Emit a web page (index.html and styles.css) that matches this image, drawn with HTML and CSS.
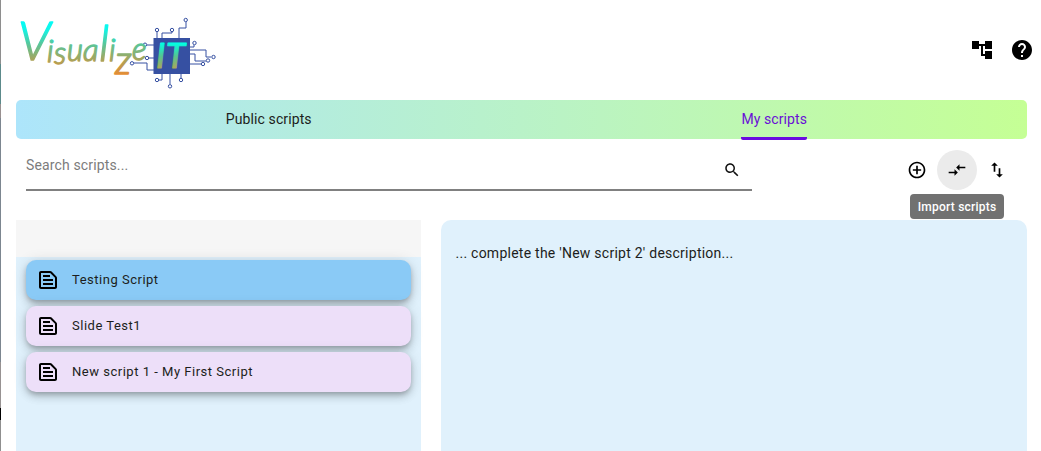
FILE: index.html
```html
<!DOCTYPE html>
<html lang="en">
<head>
<meta charset="utf-8">
<title>VisualizeIT</title>
<link rel="stylesheet" href="styles.css">
</head>
<body>
<div class="edge"></div>
<div class="page">
  <header class="header">
    <svg class="logo" viewBox="20 14 200 78" role="img" aria-label="VisualizeIT">
      <defs>
        <linearGradient id="ink" gradientUnits="userSpaceOnUse" x1="0" y1="18" x2="0" y2="80">
          <stop offset="0" stop-color="#00ffff"/>
          <stop offset=".18" stop-color="#0ff5e8"/>
          <stop offset=".42" stop-color="#58c69a"/>
          <stop offset=".7" stop-color="#b0a155"/>
          <stop offset="1" stop-color="#fb8427"/>
        </linearGradient>
        <linearGradient id="chipInk" gradientUnits="userSpaceOnUse" x1="0" y1="43" x2="0" y2="70">
          <stop offset="0" stop-color="#00ffe5"/>
          <stop offset=".5" stop-color="#58c48f"/>
          <stop offset="1" stop-color="#b7a352"/>
        </linearGradient>
      </defs>
      <g class="wires">
        <path d="M157 38v-6M162 38v-5h10v-1M179 38v-10h7v-6M190 47h4v-2M190 50h16v7h5M190 54h5v7h11M190 64h11M154 45h-7M154 58h-5M154 70h-7v-7h-13M162 74v6h-3M170 74v10M181 74v4"/>
        <circle cx="157" cy="30" r="1.7"/><circle cx="172" cy="30" r="1.7"/><circle cx="185.700" cy="20" r="1.700"/>
        <circle cx="194.500" cy="43" r="1.700"/><circle cx="213.500" cy="57" r="1.700"/><circle cx="208" cy="60.500" r="1.700"/>
        <circle cx="203" cy="64" r="1.700"/><circle cx="145" cy="44.700" r="1.700"/><circle cx="147" cy="58" r="1.700"/>
        <circle cx="132" cy="63.300" r="1.700"/><circle cx="157" cy="80" r="1.700"/><circle cx="170" cy="86.300" r="1.700"/>
        <circle cx="181" cy="80" r="1.700"/>
      </g>
      <rect x="153.500" y="38" width="36.500" height="36" fill="#3650a2"/>
      <text class="word" fill="url(#ink)" stroke="url(#ink)"><tspan class="cap" x="18" y="60">V</tspan><tspan x="47" y="62">i</tspan><tspan x="54" y="64">s</tspan><tspan x="67" y="61">u</tspan><tspan x="83" y="61">a</tspan><tspan class="tall" x="99" y="61">l</tspan><tspan x="109" y="61">i</tspan><tspan class="low" x="115" y="74">z</tspan><tspan x="132" y="60">e</tspan></text>
      <text class="chip" fill="url(#chipInk)" stroke="url(#chipInk)"><tspan x="156" y="68">I</tspan><tspan x="166" y="68">T</tspan></text>
    </svg>
    <nav class="actions">
      <svg class="icon24" viewBox="0 0 24 24"><path d="M22 11V3h-7v3H9V3H2v8h7V8h2v10h4v3h7v-8h-7v3h-2V8h2v3z"/></svg>
      <svg class="icon24" viewBox="0 0 24 24"><path d="M12 2C6.480 2 2 6.480 2 12s4.480 10 10 10 10-4.480 10-10S17.520 2 12 2zm1 17h-2v-2h2v2zm2.070-7.750l-.9.920C13.450 12.900 13 13.500 13 15h-2v-.5c0-1.100.45-2.100 1.170-2.830l1.240-1.260c.37-.36.59-.86.59-1.410 0-1.100-.9-2-2-2s-2 .9-2 2H8c0-2.210 1.790-4 4-4s4 1.790 4 4c0 .88-.36 1.680-.93 2.250z"/></svg>
    </nav>
  </header>

  <div class="tabs">
    <div class="tab"><span class="tab-label">Public scripts</span></div>
    <div class="tab"><span class="tab-label active">My scripts</span></div>
  </div>

  <div class="toolbar">
    <div class="search">
      <span class="placeholder">Search scripts...</span>
      <svg class="icon18" viewBox="0 0 24 24"><path d="M15.500 14h-.79l-.28-.27C15.410 12.590 16 11.110 16 9.500 16 5.910 13.090 3 9.500 3S3 5.910 3 9.500 5.910 16 9.500 16c1.610 0 3.090-.59 4.230-1.570l.27.28v.79l5 4.990L20.490 19l-4.990-5zm-6 0C7.010 14 5 11.990 5 9.500S7.010 5 9.500 5 14 7.010 14 9.500 11.990 14 9.500 14z"/></svg>
    </div>
    <div class="tools">
      <div class="tool"><svg class="icon20" viewBox="0 0 24 24"><path d="M13 7h-2v4H7v2h4v4h2v-4h4v-2h-4V7zm-1-5C6.480 2 2 6.480 2 12s4.480 10 10 10 10-4.480 10-10S17.520 2 12 2zm0 18c-4.410 0-8-3.590-8-8s3.590-8 8-8 8 3.590 8 8-3.590 8-8 8z"/></svg></div>
      <div class="tool hovered"><svg class="icon20" viewBox="0 0 24 24"><path d="M9.010 14H2v2h7.010v3L13 15l-3.990-4v3zm5.980-1v-3H22V8h-7.010V5L11 9l3.990 4z"/></svg><span class="tooltip">Import scripts</span></div>
      <div class="tool"><svg class="icon20" viewBox="0 0 24 24"><path d="M9 3L5 6.990h3V14h2V6.990h3L9 3zm7 14.010V10h-2v7.010h-3L15 21l4-3.990h-3z"/></svg></div>
    </div>
  </div>

  <main class="content">
    <section class="list">
      <div class="list-head"></div>
      <div class="items">
        <div class="item selected"><svg class="icon24" viewBox="0 0 24 24"><path d="M14.170 5L19 9.830V19H5V5h9.170m0-2H5c-1.100 0-2 .9-2 2v14c0 1.100.9 2 2 2h14c1.100 0 2-.9 2-2V9.830c0-.53-.21-1.040-.59-1.410l-4.830-4.830c-.37-.38-.88-.59-1.410-.59zM7 15h10v2H7v-2zm0-4h10v2H7v-2zm0-4h7v2H7V7z"/></svg><span>Testing Script</span></div>
        <div class="item"><svg class="icon24" viewBox="0 0 24 24"><path d="M14.170 5L19 9.830V19H5V5h9.170m0-2H5c-1.100 0-2 .9-2 2v14c0 1.100.9 2 2 2h14c1.100 0 2-.9 2-2V9.830c0-.53-.21-1.040-.59-1.410l-4.830-4.830c-.37-.38-.88-.59-1.410-.59zM7 15h10v2H7v-2zm0-4h10v2H7v-2zm0-4h7v2H7V7z"/></svg><span>Slide Test1</span></div>
        <div class="item"><svg class="icon24" viewBox="0 0 24 24"><path d="M14.170 5L19 9.830V19H5V5h9.170m0-2H5c-1.100 0-2 .9-2 2v14c0 1.100.9 2 2 2h14c1.100 0 2-.9 2-2V9.830c0-.53-.21-1.040-.59-1.410l-4.830-4.830c-.37-.38-.88-.59-1.410-.59zM7 15h10v2H7v-2zm0-4h10v2H7v-2zm0-4h7v2H7V7z"/></svg><span>New script 1 - My First Script</span></div>
      </div>
    </section>
    <section class="detail">... complete the 'New script 2' description...</section>
  </main>
</div>
</body>
</html>
```
FILE: styles.css
```css
* { box-sizing: border-box; }
body {
  margin: 0;
  height: 451px;
  overflow: hidden;
  display: flex;
  background: #fff;
  color: #1c1e20;
  font-family: Roboto, "Liberation Sans", sans-serif;
  font-size: 14px;
}
.edge {
  width: 1px;
  background: linear-gradient(#8e8e8e 64px, #5c8a8b 64px 104px, #989090 104px 118px, #7c8690 118px 362px, #979292 362px 408px, #000 408px 420px, #8f8f8f 420px);
}
.page { flex: 1; display: flex; flex-direction: column; padding: 0 14px 0 15px; }
.header { height: 100px; display: flex; justify-content: space-between; }
.logo { width: 200px; height: 78px; margin: 14px 0 0 4px; overflow: visible; }
.wires { fill: none; stroke: #3650a2; stroke-width: 1; }
.word { font: italic 300 31px Lato, sans-serif; stroke-width: 1.4; stroke-linejoin: round; }
.cap { font-size: 54px; }
.tall { font-size: 49px; }
.low { font-size: 40px; }
.chip { font: italic 400 35px Lato, sans-serif; stroke-width: 1.2; stroke-linejoin: round; }
.actions { display: flex; gap: 16px; padding-top: 38px; margin-right: -7px; }
.icon24 { width: 24px; height: 24px; flex: none; fill: #000; }
.icon20 { width: 20px; height: 20px; fill: #000; }
.icon18 { width: 18px; height: 18px; fill: #111; }
.tabs {
  height: 39px;
  display: grid;
  grid-template-columns: 1fr 1fr;
  border-radius: 5px;
  background: linear-gradient(90deg, #ade5fb, #c5ff95);
}
.tab { display: flex; justify-content: center; }
.tab-label { height: 40px; line-height: 38px; letter-spacing: .1px; }
.active { color: #6a0fd6; border-bottom: 3px solid #6a0be0; border-radius: 2px; }
.toolbar { height: 81px; display: flex; justify-content: space-between; padding: 11px 10px 0; }
.search {
  width: 726px;
  height: 41px;
  display: flex;
  justify-content: space-between;
  padding: 11px 11px 0 0;
  border-bottom: 2px solid #808080;
}
.placeholder { line-height: 16px; margin-top: -4px; color: #7c7c7c; letter-spacing: .14px; }
.tools { display: flex; }
.tool { position: relative; width: 40px; height: 40px; display: grid; place-items: center; border-radius: 50%; }
.hovered { background: #ebebeb; }
.tooltip {
  position: absolute;
  z-index: 1;
  top: 44px;
  left: 50%;
  width: 94px;
  height: 25px;
  margin-left: -47px;
  border-radius: 4px;
  background: #717171;
  color: #fff;
  font-size: 12px;
  font-weight: 500;
  line-height: 26px;
  letter-spacing: .22px;
  text-align: center;
}
.content { flex: 1; display: flex; gap: 20px; }
.list { width: 404.5px; background: #e0f1fc; }
.list-head { height: 37px; background: #f6f6f6; }
.items { display: flex; flex-direction: column; gap: 6px; padding: 3px 10px; }
.item {
  height: 40px;
  display: flex;
  align-items: center;
  gap: 12px;
  padding-left: 10px;
  border-radius: 10px;
  background: #eddff9;
  box-shadow: 0 3px 5px -1px rgba(0,0,0,.2), 0 5px 8px rgba(0,0,0,.14), 0 1px 14px rgba(0,0,0,.12);
  font-size: 13px;
  letter-spacing: .51px;
}
.item span { padding-bottom: 2px; }
.selected { background: #8acaf6; }
.detail { flex: 1; padding: 25px 15px; line-height: 16px; border-radius: 10px 10px 0 0; background: #e0f1fc; letter-spacing: .25px; }
```
